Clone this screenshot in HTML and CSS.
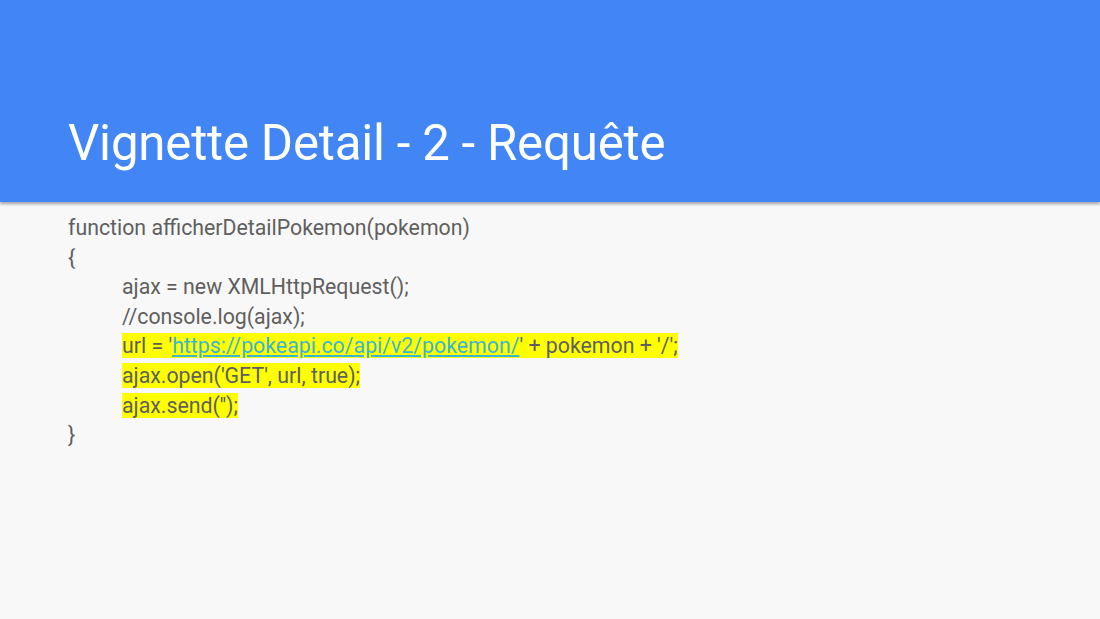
FILE: index.html
```html
<!DOCTYPE html>
<html>
<head>
<meta charset="utf-8">
<link rel="stylesheet" href="styles.css">
</head>
<body>
<div class="slide">
  <header class="header">
    <h1 class="title">Vignette Detail - 2 - Requête</h1>
  </header>
  <main class="code">
    <div class="line">function afficherDetailPokemon(pokemon)</div>
    <div class="line">{</div>
    <div class="line indent">ajax = new XMLHttpRequest();</div>
    <div class="line indent">//console.log(ajax);</div>
    <div class="line indent"><span class="hl">url = '<a class="link" href="#">https://pokeapi.co/api/v2/pokemon/</a>' + pokemon + '/';</span></div>
    <div class="line indent"><span class="hl">ajax.open('GET', url, true);</span></div>
    <div class="line indent"><span class="hl">ajax.send('');</span></div>
    <div class="line">}</div>
  </main>
</div>
</body>
</html>
```
FILE: styles.css
```css
html, body {
  margin: 0;
  padding: 0;
}
body {
  width: 1100px;
  height: 619px;
  overflow: hidden;
  background: #f8f8f8;
  font-family: Roboto, "Liberation Sans", sans-serif;
}
.slide {
  width: 1100px;
  height: 619px;
  display: flex;
  flex-direction: column;
}
.header {
  height: 202px;
  background: #4285f4;
  box-shadow: 0 2px 3px rgba(0,0,0,0.35);
  display: flex;
  align-items: flex-end;
  padding: 0 0 0 68px;
  box-sizing: border-box;
  position: relative;
  z-index: 1;
}
.title {
  margin: 0 0 34px 0;
  color: #ffffff;
  font-weight: 400;
  font-size: 49.2px;
  line-height: 1;
  letter-spacing: -0.2px;
}
.code {
  padding: 11px 0 0 68px;
  color: #5f5f5f;
  font-size: 21.3px;
}
.line {
  height: 29.6px;
  line-height: 29.6px;
}
.indent {
  padding-left: 54px;
}
.hl {
  background: #ffff00;
}
.link {
  color: #3bb5d6;
  text-decoration: underline;
}
```
